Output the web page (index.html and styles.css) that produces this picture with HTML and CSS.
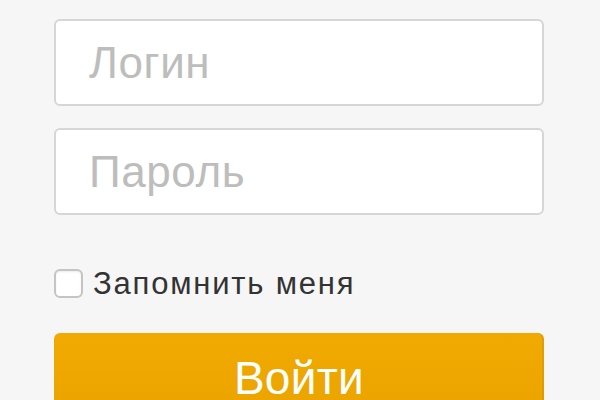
FILE: index.html
```html
<!DOCTYPE html>
<html lang="ru">
<head>
<meta charset="utf-8">
<link rel="stylesheet" href="styles.css">
</head>
<body>
<form class="login">
  <input class="field" type="text" placeholder="Логин">
  <input class="field field-pass" type="password" placeholder="Пароль">
  <label class="remember"><span class="box"></span><span class="remember-text">Запомнить меня</span></label>
  <button class="submit" type="button">Войти</button>
</form>
</body>
</html>
```
FILE: styles.css
```css
html, body {
  margin: 0;
  padding: 0;
  background: #f6f6f6;
  height: 100%;
  overflow: hidden;
}
.login {
  display: flex;
  flex-direction: column;
  width: 490px;
  margin: 0 0 0 54px;
  padding-top: 19px;
  font-family: "Liberation Sans", Arial, sans-serif;
}
.field {
  box-sizing: border-box;
  height: 87px;
  width: 490px;
  border: 2px solid #d6d6d6;
  border-radius: 6px;
  background: #fff;
  padding: 0 0 0 33px;
  font-family: "Liberation Sans", Arial, sans-serif;
  font-size: 44px;
  letter-spacing: 0.6px;
  color: #333;
  outline: none;
  margin: 0;
}
.field::placeholder {
  color: #bdbdbd;
}
.field-pass {
  margin-top: 22px;
}
.remember {
  display: flex;
  align-items: center;
  margin-top: 54px;
  height: 29px;
}
.box {
  box-sizing: border-box;
  width: 29px;
  height: 29px;
  border: 2px solid #c4c4c4;
  border-radius: 6px;
  background: #fff;
  box-shadow: inset 0 1px 2px rgba(0,0,0,0.08);
}
.remember-text {
  margin-left: 10px;
  font-size: 31px;
  letter-spacing: 1.8px;
  color: #333;
  line-height: 29px;
}
.submit {
  margin-top: 35px;
  height: 90px;
  width: 490px;
  border: none;
  border-radius: 6px;
  background: linear-gradient(#f0aa00, #eba300);
  box-shadow: inset -2px 0 0 rgba(0,0,0,0.06);
  color: #fff;
  font-family: "Liberation Sans", Arial, sans-serif;
  font-size: 46px;
  letter-spacing: 0.3px;
  padding: 22px 0 0 0;
  line-height: 1;
  display: flex;
  align-items: flex-start;
  justify-content: center;
}
```
